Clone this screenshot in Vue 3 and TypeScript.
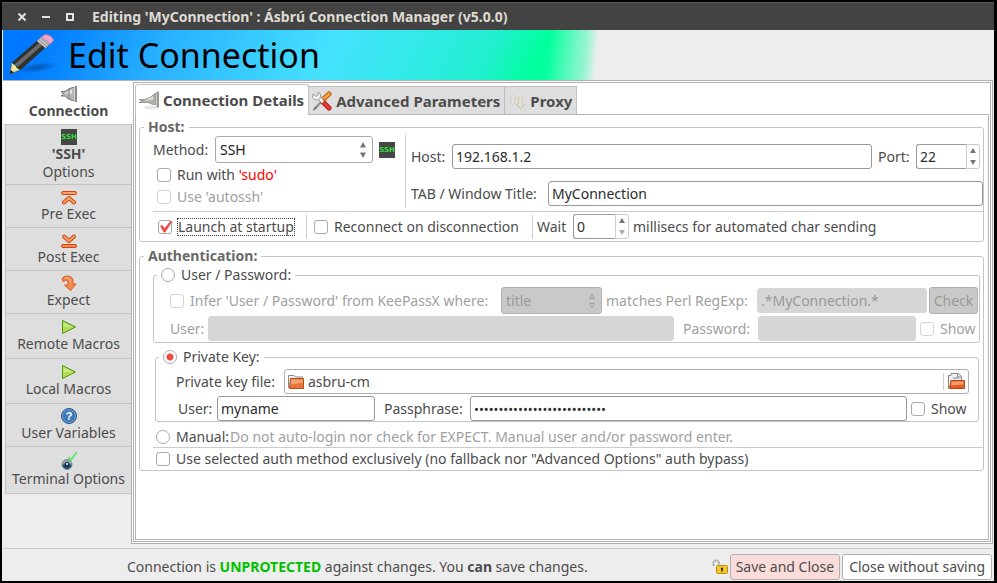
<script setup lang="ts">
import { ref } from 'vue'

interface SideTab {
  icon: string
  label: string
  strong?: string
  size: string
}

const sideTabs: SideTab[] = [
  { icon: 'plug', label: '', strong: 'Connection', size: 'active' },
  { icon: 'ssh', label: 'Options', strong: "'SSH'", size: 'double' },
  { icon: 'pre', label: 'Pre Exec', size: 'short' },
  { icon: 'post', label: 'Post Exec', size: 'short' },
  { icon: 'expect', label: 'Expect', size: 'short' },
  { icon: 'play', label: 'Remote Macros', size: 'tall' },
  { icon: 'play', label: 'Local Macros', size: 'tall' },
  { icon: 'help', label: 'User Variables', size: 'short' },
  { icon: 'terminal', label: 'Terminal Options', size: 'last' },
]

const method = ref('SSH')
const host = ref('192.168.1.2')
const port = ref(22)
const title = ref('MyConnection')
const sudo = ref(false)
const launch = ref(true)
const reconnect = ref(false)
const wait = ref(0)
const auth = ref('key')
const pattern = ref('.*MyConnection.*')
const keyUser = ref('myname')
const passphrase = ref('abcdefghijklmnopqrstuvwxyz0')
const showPassphrase = ref(false)
const exclusive = ref(false)
</script>

<template>
  <div class="window">
    <header class="titlebar">
      <button class="wm" type="button" aria-label="Close">
        <svg width="10" height="10" viewBox="0 0 10 10"><path d="M1.500 1.500l7 7M8.500 1.500l-7 7" stroke="#e6e3dc" stroke-width="2" /></svg>
      </button>
      <button class="wm" type="button" aria-label="Minimize">
        <svg width="10" height="10" viewBox="0 0 10 10"><path d="M1 5h8" stroke="#e6e3dc" stroke-width="2" /></svg>
      </button>
      <button class="wm" type="button" aria-label="Maximize">
        <svg width="10" height="10" viewBox="0 0 10 10"><path d="M2 2h6v6H2z" fill="none" stroke="#e6e3dc" stroke-width="2" /></svg>
      </button>
      <span class="caption">Editing 'MyConnection' : Ásbrú Connection Manager (v5.0.0)</span>
    </header>

    <div class="banner">
      <svg width="52" height="46" viewBox="0 0 54 46">
        <defs>
          <radialGradient id="shade"><stop offset="0" stop-color="#003a80" stop-opacity="0.6" /><stop offset="1" stop-color="#003a80" stop-opacity="0" /></radialGradient>
        </defs>
        <ellipse cx="31" cy="36" rx="22" ry="5" fill="url(#shade)" transform="rotate(-8 31 36)" />
        <path d="M3 43L5 31L14 38Z" fill="#f3e7a4" stroke="#6b5a20" stroke-width="0.600" />
        <path d="M3 43L3.800 38.500L7 41Z" fill="#161616" />
        <path d="M5 31L32 7.500L41 14.500L14 38.500L10 36.500L9 33Z" fill="#303030" />
        <path d="M8 32.500L34.500 9.500L37.500 12L11 35.500Z" fill="#696969" />
        <path d="M31 8.500L36 4L45 11L40 16Z" fill="#c9c9c9" stroke="#777" stroke-width="0.600" />
        <path d="M33 7l8.500 7.500M35 5.500l8.500 7" stroke="#777" stroke-width="0.900" />
        <path d="M36 4L39 2Q42 1 45.500 3.500Q49 6.500 48 8.500L45 11.500Z" fill="#f2a3cf" stroke="#b26d96" stroke-width="0.600" />
      </svg>
      <h1>Edit Connection</h1>
    </div>

    <main class="body">
      <nav class="side" aria-label="Sections">
        <button v-for="tab in sideTabs" :key="(tab.strong ?? '') + tab.label" type="button" class="side-tab" :class="tab.size">
          <svg v-if="tab.icon === 'plug'" width="16" height="16" viewBox="0 0 16 16">
            <path d="M0 5.500h4l3.500-2.500 4-1.500h2v13h-2l-4-1.500-3.500-3H0l2.500-2z" fill="#b4b5b1" stroke="#777875" />
            <path d="M3 7.500l5-2 3-2v4z" fill="#e6e6e2" /><path d="M8 3v10" stroke="#80817d" /><path d="M15 0v16" stroke="#60615e" stroke-width="1.500" /><path d="M13.500 0v16" stroke="#d8d8d4" />
          </svg>
          <svg v-else-if="tab.icon === 'ssh'" class="ssh" width="16" height="16" viewBox="0 0 16 16" role="img">
            <rect width="16" height="16" fill="#454746" />
            <text x="8" y="10" text-anchor="middle">SSH</text>
          </svg>
          <svg v-else-if="tab.icon === 'pre'" width="16" height="16" viewBox="0 0 16 16">
            <rect x="0.500" y="2.500" width="15" height="3" rx="1.500" fill="#f6a36b" stroke="#d4440c" />
            <path d="M3 13.500L8 9l5 4.500" fill="none" stroke="#d4440c" stroke-width="4" stroke-linecap="round" stroke-linejoin="round" />
            <path d="M3 13.500L8 9l5 4.500" fill="none" stroke="#f9a36a" stroke-width="2" stroke-linecap="round" stroke-linejoin="round" />
          </svg>
          <svg v-else-if="tab.icon === 'post'" width="16" height="16" viewBox="0 0 16 16">
            <rect x="0.500" y="12.500" width="15" height="3" rx="1.500" fill="#f58b55" stroke="#d4440c" />
            <path d="M3 4.500L8 9l5-4.500" fill="none" stroke="#d4440c" stroke-width="4" stroke-linecap="round" stroke-linejoin="round" />
            <path d="M3 4.500L8 9l5-4.500" fill="none" stroke="#f9a36a" stroke-width="2" stroke-linecap="round" stroke-linejoin="round" />
          </svg>
          <svg v-else-if="tab.icon === 'expect'" width="16" height="16" viewBox="0 0 16 16">
            <path d="M1 5Q1.500 1 6 1Q12 1 12 6.500V9H15L9.500 15.500L3.500 10H7V7.500Q7 5 4.500 5L2.500 7Z" fill="#f28c50" stroke="#d4561c" stroke-linejoin="round" />
            <path d="M4 2.500Q9 2 9.500 7.500" fill="none" stroke="#f8c19c" />
          </svg>
          <svg v-else-if="tab.icon === 'play'" width="16" height="16" viewBox="0 0 16 16">
            <path d="M1.500 1.500L14.500 8L1.500 14.500Z" fill="#b3dc52" stroke="#4e9a14" stroke-linejoin="round" />
            <path d="M2.500 3.500L11 8H2.500Z" fill="#cbe98a" />
          </svg>
          <svg v-else-if="tab.icon === 'help'" class="help" width="16" height="16" viewBox="0 0 16 16">
            <circle cx="8" cy="8" r="7.500" fill="#3c78b8" stroke="#245488" />
            <circle cx="8" cy="8" r="6.500" fill="none" stroke="#80aadb" stroke-width="0.800" />
            <text x="8" y="12" text-anchor="middle">?</text>
          </svg>
          <svg v-else width="16" height="18" viewBox="0 0 16 18">
            <circle cx="6" cy="12.500" r="5" fill="#8ca6a8" stroke="#788b90" />
            <path d="M1.500 12.500h9a4.500 4.500 0 0 1-9 0z" fill="#214c70" />
            <circle cx="6" cy="12.500" r="2.500" fill="#13304e" /><circle cx="6" cy="12" r="1" fill="#fff" />
            <path d="M7.500 5l2.500 3L15.500 0.500" fill="none" stroke="#65e868" stroke-width="2" />
          </svg>
          <b v-if="tab.strong">{{ tab.strong }}</b>
          <span v-if="tab.label">{{ tab.label }}</span>
        </button>
      </nav>

      <section class="panel">
        <div class="panel-inner">
          <div class="tabs" role="tablist">
            <button class="tab on" type="button" role="tab" aria-selected="true">
              <svg width="20" height="20" viewBox="0 0 20 20">
                <ellipse cx="12" cy="17.500" rx="7" ry="2" fill="#e8e8e8" />
                <path d="M0 9.500h5l6-2 5-4h1v11h-3l-5-2H0l4-1.500z" fill="#b0b1ad" stroke="#858682" stroke-width="0.700" />
                <path d="M5 11l9-4.500v3z" fill="#e4e4df" /><path d="M19 1.500v16" stroke="#777873" stroke-width="1.500" /><path d="M17.500 1.500v16" stroke="#ccccc7" />
              </svg>
              Connection Details
            </button>
            <button class="tab" type="button" role="tab" aria-selected="false">
              <svg width="20" height="20" viewBox="0 0 20 20">
                <path d="M17 3L10.500 9" stroke="#c75b12" stroke-width="5" stroke-linecap="round" />
                <path d="M17 3L10.500 9" stroke="#f2a23c" stroke-width="3" stroke-linecap="round" />
                <path d="M10 10L3 17.500" stroke="#8c8c88" stroke-width="2" /><path d="M4.500 16L1.500 19" stroke="#656562" stroke-width="1.500" />
                <path d="M11 11l6 6" stroke="#b51616" stroke-width="5" stroke-linecap="round" />
                <path d="M11 11l6 6" stroke="#e53b34" stroke-width="3" stroke-linecap="round" />
                <path d="M5 5l6 6" stroke="#8c8c88" stroke-width="4" /><path d="M5 5l6 6" stroke="#f1f1ee" stroke-width="2.500" />
                <path d="M1 3a4 4 0 0 0 7 4a4 4 0 0 0-2-6v3L4 5.500z" fill="#f1f1ee" stroke="#8c8c88" stroke-width="0.800" />
              </svg>
              Advanced Parameters
            </button>
            <button class="tab" type="button" role="tab" aria-selected="false">
              <svg width="18" height="18" viewBox="0 0 18 18">
                <path d="M1.500 6L5 2.500L8.500 6H6.500V12H3.500V6Z" fill="#e6e1d8" stroke="#c9c5bd" stroke-dasharray="1 1" />
                <path d="M10.500 5h4v7h2.500L12.500 16.500L8 12h2.500z" fill="#e6ddcc" stroke="#d4cfc6" />
                <path d="M8 12l4.500 4.500L17 12" fill="none" stroke="#aaa" stroke-dasharray="2 1" />
              </svg>
              Proxy
            </button>
          </div>

          <div class="page">
            <fieldset class="group host-group">
              <legend class="heading">Host:</legend>
              <div class="host-top">
                <div class="method-col">
                  <div class="line method-line">
                    <label class="method-label" for="method">Method:</label>
                    <span class="drop">
                      <select id="method" v-model="method"><option>SSH</option></select>
                      <svg width="8" height="20" viewBox="0 0 8 20"><path d="M1 7.500L4 2L7 7.500Z M1 12.500L4 18L7 12.500Z" fill="#777" /></svg>
                    </span>
                    <svg class="ssh" width="16" height="16" viewBox="0 0 16 16"><rect width="16" height="16" fill="#454746" /><text x="8" y="10" text-anchor="middle">SSH</text></svg>
                  </div>
                  <label class="tick"><input v-model="sudo" type="checkbox" /><span>Run with <em>'sudo'</em></span></label>
                  <label class="tick off"><input type="checkbox" disabled /><span>Use 'autossh'</span></label>
                </div>
                <div class="host-col">
                  <div class="line host-line">
                    <label class="host-label" for="host">Host:</label>
                    <input id="host" v-model="host" class="entry grow" type="text" />
                    <label class="port-label" for="port">Port:</label>
                    <span class="spin port-spin">
                      <input id="port" v-model="port" class="entry" type="number" />
                      <span class="steps">
                        <button type="button" aria-label="Increase port" @click="port++"><svg width="6" height="5" viewBox="0 0 6 5"><path d="M0 5L3 0L6 5Z" fill="#777" /></svg></button>
                        <button type="button" aria-label="Decrease port" @click="port--"><svg width="6" height="5" viewBox="0 0 6 5"><path d="M0 0L3 5L6 0Z" fill="#777" /></svg></button>
                      </span>
                    </span>
                  </div>
                  <div class="line">
                    <label class="title-label" for="title">TAB / Window Title:</label>
                    <input id="title" v-model="title" class="entry grow" type="text" />
                  </div>
                </div>
              </div>
              <hr />
              <div class="line startup">
                <label class="tick launch"><input v-model="launch" type="checkbox" /><span class="focus">Launch at startup</span></label>
                <label class="tick reconnect"><input v-model="reconnect" type="checkbox" /><span>Reconnect on disconnection</span></label>
                <label class="wait-label" for="wait">Wait</label>
                <span class="spin wait-spin">
                  <input id="wait" v-model="wait" class="entry" type="number" />
                  <span class="steps">
                    <button type="button" aria-label="Increase wait" @click="wait++"><svg width="6" height="5" viewBox="0 0 6 5"><path d="M0 5L3 0L6 5Z" fill="#777" /></svg></button>
                    <button type="button" aria-label="Decrease wait" disabled><svg width="6" height="5" viewBox="0 0 6 5"><path d="M0 0L3 5L6 0Z" fill="#aaa" /></svg></button>
                  </span>
                </span>
                <span>millisecs for automated char sending</span>
              </div>
            </fieldset>

            <fieldset class="group auth-group">
              <legend class="heading">Authentication:</legend>

              <fieldset class="group password-group">
                <legend><label class="tick"><input v-model="auth" type="radio" name="auth" value="password" /><span>User / Password:</span></label></legend>
                <div class="line off infer">
                  <label class="tick infer-label"><input type="checkbox" disabled /><span>Infer 'User / Password' from KeePassX where:</span></label>
                  <span class="drop small">
                    <select aria-label="KeePassX field" disabled><option>title</option></select>
                    <svg width="8" height="20" viewBox="0 0 8 20"><path d="M1.500 7.500L4 3L6.500 7.500Z M1.500 12.500L4 17L6.500 12.500Z" fill="#c6c6c6" stroke="#999" stroke-width="0.800" /></svg>
                  </span>
                  <label class="regexp-label" for="pattern">matches Perl RegExp:</label>
                  <input id="pattern" v-model="pattern" class="entry grow" type="text" disabled />
                  <button class="check" type="button" disabled>Check</button>
                </div>
                <div class="line off credentials">
                  <label class="user-label" for="pw-user">User:</label>
                  <input id="pw-user" class="entry grow" type="text" disabled />
                  <label class="pw-label" for="pw-pass">Password:</label>
                  <input id="pw-pass" class="entry pw-entry" type="password" disabled />
                  <label class="tick show"><input type="checkbox" disabled /><span>Show</span></label>
                </div>
              </fieldset>

              <fieldset class="group key-group">
                <legend><label class="tick"><input v-model="auth" type="radio" name="auth" value="key" /><span>Private Key:</span></label></legend>
                <div class="line key-file">
                  <span id="key-label" class="key-label">Private key file:</span>
                  <button class="chooser" type="button" aria-labelledby="key-label">
                    <svg width="16" height="14" viewBox="0 0 16 14">
                      <path d="M0.500 12.500V0.500H6L7.500 2H14.500V12.500Z" fill="#eee" stroke="#888" />
                      <path d="M2.500 3.500H15.500V13.500H1.500Z" fill="#e8763a" stroke="#bc4c18" /><path d="M3 4.500h12v3l-12 2z" fill="#f3a271" />
                    </svg>
                    <span class="grow">asbru-cm</span>
                    <svg class="open" width="17" height="17" viewBox="0 0 17 17">
                      <path d="M0.500 15.500V2.500H3V0.500H10.500L13.500 3.500V12H3Z" fill="#eee" stroke="#888" />
                      <path d="M9.500 0.500v3.500h4M5 5h6" fill="none" stroke="#888" />
                      <path d="M3 7.500H16.500V15.500H1.500Z" fill="#e65c20" stroke="#b8481b" /><path d="M3.500 8.500h12v3l-12 1z" fill="#f59b69" />
                    </svg>
                  </button>
                </div>
                <div class="line">
                  <label class="key-user-label" for="key-user">User:</label>
                  <input id="key-user" v-model="keyUser" class="entry key-user" type="text" />
                  <label class="phrase-label" for="phrase">Passphrase:</label>
                  <input id="phrase" v-model="passphrase" class="entry grow phrase" :type="showPassphrase ? 'text' : 'password'" />
                  <label class="tick show"><input v-model="showPassphrase" type="checkbox" /><span>Show</span></label>
                </div>
              </fieldset>

              <label class="tick manual"><input v-model="auth" type="radio" name="auth" value="manual" /><span>Manual:</span><small>Do not auto-login nor check for EXPECT. Manual user and/or password enter.</small></label>
              <hr />
              <label class="tick exclusive"><input v-model="exclusive" type="checkbox" /><span>Use selected auth method exclusively (no fallback nor "Advanced Options" auth bypass)</span></label>
            </fieldset>
          </div>
        </div>
      </section>
    </main>

    <footer class="foot">
      <p>Connection is <b class="ok">UNPROTECTED</b> against changes. You <b>can</b> save changes.</p>
      <svg width="16" height="16" viewBox="0 0 16 16">
        <path d="M1.500 7V4Q1.500 1.500 4 1.500Q7 1.500 7 5V7" fill="none" stroke="#aaa" stroke-width="2" stroke-dasharray="2 0.500" />
        <rect x="4.500" y="6.500" width="11" height="8" rx="1" fill="#f4c72d" stroke="#b98f12" />
        <path d="M10 8.500a1.200 1.200 0 0 1 .6 2.200v2h-1.200v-2A1.200 1.200 0 0 1 10 8.500z" fill="#222" />
      </svg>
      <button class="action save" type="button">Save and Close</button>
      <button class="action" type="button">Close without saving</button>
    </footer>
  </div>
</template>

<style>
body {
  margin: 0;
  background: #000;
}
</style>

<style scoped>
* {
  box-sizing: border-box;
}
.window {
  display: flex;
  flex-direction: column;
  min-height: 100vh;
  padding: 1px;
  border: solid #000;
  border-width: 2px 3px 2px 2px;
  background: #ededed;
  font: 14px/16px "Noto Sans", "Open Sans", sans-serif;
  color: #4c4c4c;
}
button,
input,
select {
  margin: 0;
  font: inherit;
  color: inherit;
}
button {
  padding: 0;
  border: 0;
  background: none;
  white-space: nowrap;
}
svg {
  flex: none;
  display: block;
}
label,
span,
b {
  white-space: nowrap;
}
.grow {
  flex: 1;
  min-width: 0;
}

.titlebar {
  display: flex;
  align-items: center;
  gap: 14px;
  height: 28px;
  margin: -1px -1px 0;
  padding: 1px 15px 0;
  border-top: 1px solid #5a5a5a;
  background: #434343;
}
.wm {
  height: 10px;
}
.caption {
  padding-left: 3px;
  font-weight: 700;
  color: #dfdbd2;
}
.banner {
  display: flex;
  align-items: center;
  gap: 9px;
  height: 50px;
  padding-left: 4px;
  background:
    linear-gradient(95deg, rgba(237, 237, 237, 0) 545px, rgba(237, 237, 237, 0.6) 582px, #ededed 594px),
    linear-gradient(115deg, #0078ff 30px, #0a88ff 70px, #28b0ff 150px, #45e0ff 300px, #30eae6 390px, #22efd0 450px, #00ff9c 497px, #10ffa6 530px);
}
.banner h1 {
  margin: 0;
  font-size: 34px;
  font-weight: 400;
  line-height: 48px;
  color: #000;
}

.body {
  display: flex;
  flex: 1;
}
.side {
  display: flex;
  flex-direction: column;
  flex: none;
  width: 128px;
  border-top: 1px solid #b5b5b5;
}
.side-tab {
  display: flex;
  flex-direction: column;
  align-items: center;
  height: 43px;
  margin-left: 2px;
  padding-top: 4px;
  border: solid #c4c4c4;
  border-width: 0 0 1px 1px;
  background: #dedede;
  line-height: 18px;
}
.side-tab.active {
  position: relative;
  z-index: 1;
  height: 44px;
  margin: 0 -2px 0 0;
  padding-top: 5px;
  border-left-color: #fff;
  background: #fff;
}
.side-tab.double {
  height: 60px;
}
.side-tab.tall {
  height: 45px;
  padding-top: 5px;
}
.side-tab.last {
  height: 47px;
  padding-top: 5px;
}
.ssh text {
  font: 700 7px "DejaVu Sans", sans-serif;
  fill: #35dd35;
}
.help text {
  font: 700 11px "Liberation Sans", sans-serif;
  fill: #fff;
}

.panel {
  display: flex;
  flex: 1;
  min-width: 0;
  padding: 1px;
  border: 1px solid #b0b0b0;
  background: #fff;
}
.panel-inner {
  display: flex;
  flex-direction: column;
  flex: 1;
  min-width: 0;
  padding: 1px;
  border: 1px solid #b0b0b0;
}
.tabs {
  display: flex;
  align-items: flex-end;
}
.tab {
  display: flex;
  align-items: center;
  gap: 4px;
  height: 28px;
  padding: 0 4px 0 3px;
  border: solid #c0c0c0;
  border-width: 1px 1px 0 0;
  background: #dedede;
  font-size: 15px;
  font-weight: 700;
}
.tab.on {
  position: relative;
  z-index: 1;
  height: 31px;
  margin-bottom: -1px;
  border-width: 1px 1px 0;
  border-radius: 3px 3px 0 0;
  background: #fff;
}
.page {
  flex: 1;
  padding: 4px;
  padding-left: 3px;
  border: 1px solid #b5b5b5;
}

.group {
  min-width: 0;
  margin: 0;
  padding: 0;
  border: 1px solid #c4c4c4;
  border-radius: 3px;
}
legend {
  height: 16px;
  margin-left: 4px;
  padding: 0 4px;
}
.heading {
  font-weight: 700;
  color: #696969;
}
.line,
.tick {
  display: flex;
  align-items: center;
}
.tick {
  gap: 6px;
}
.off {
  color: #a0a0a0;
}
em {
  font-style: normal;
  color: #f00;
}
hr {
  margin: 0;
  border: 0;
  border-top: 1px solid #ccc;
}
.entry {
  height: 25px;
  padding: 0 3px;
  border: 1px solid #999;
  border-radius: 3px;
  outline: 0;
  background: #fff;
  color: #2c2c2c;
}
.entry:disabled {
  border-color: #d6d6d6;
  background: #d6d6d6;
  color: #999;
}
input[type='number'] {
  appearance: textfield;
}
input[type='number']::-webkit-inner-spin-button {
  appearance: none;
}
input[type='checkbox'],
input[type='radio'] {
  flex: none;
  appearance: none;
  width: 14px;
  height: 14px;
  border: 1px solid #aaa;
  border-radius: 3px;
  background: #fff;
}
input[type='radio'] {
  border-radius: 50%;
}
input[type='radio']:checked {
  background: radial-gradient(circle, #ef4a42 3px, #fff 4px);
}
input[type='checkbox']:disabled {
  border-color: #d4d4d4;
}
input[type='checkbox']:checked::before {
  content: '';
  display: block;
  width: 14px;
  height: 12px;
  background: #f04b46;
  clip-path: polygon(8% 46%, 22% 38%, 40% 64%, 84% 0, 100% 0, 44% 100%, 34% 100%);
}
.drop {
  display: grid;
  align-items: center;
  width: 158px;
}
.drop > * {
  grid-area: 1 / 1;
}
.drop svg {
  justify-self: end;
  margin-right: 6px;
  pointer-events: none;
}
select {
  appearance: none;
  width: 100%;
  height: 27px;
  padding: 0 4px;
  border: 1px solid #aaa;
  border-radius: 3px;
  background: #fff;
  color: #222;
}
select:disabled,
.check {
  border: 1px solid #b0b0b0;
  border-radius: 3px;
  background: #c9c9c9;
  color: #999;
  opacity: 1;
}
.drop.small {
  width: 101px;
}
.spin {
  display: flex;
}
.spin .entry {
  width: 50px;
  border-right: 0;
  border-radius: 3px 0 0 3px;
}
.steps {
  display: grid;
  justify-items: center;
  width: 14px;
  border: 1px solid #ccc;
  border-radius: 0 3px 3px 0;
}
.steps button {
  display: grid;
  place-items: center;
}

.host-top {
  display: flex;
  margin-bottom: 3px;
}
.method-col {
  width: 266px;
  padding: 1px 0 0 13px;
  border-right: 1px solid #ccc;
}
.method-line {
  height: 27px;
  margin-bottom: 1px;
}
.method-line .ssh {
  margin-left: 6px;
}
.method-label {
  width: 62px;
}
.method-col .tick {
  height: 22px;
  padding-left: 4px;
}
.host-col {
  display: grid;
  flex: 1;
  align-content: start;
  gap: 12px;
  min-width: 0;
  padding: 9px 0 0 5px;
}
.host-line {
  margin-right: 3px;
}
.host-label {
  width: 41px;
}
.port-label {
  width: 44px;
  padding-left: 6px;
}
.title-label {
  width: 137px;
}
.host-group hr,
.auth-group hr {
  margin-left: 13px;
}
.startup {
  height: 29px;
  padding-left: 18px;
}
.startup .tick {
  height: 24px;
  border-right: 1px solid #ccc;
}
.launch {
  width: 149px;
}
.focus {
  outline: 1px dotted #444;
}
.reconnect {
  width: 226px;
  padding-left: 7px;
}
.wait-label {
  width: 40px;
  padding-left: 4px;
}
.wait-spin {
  margin-right: 4px;
}
.wait-spin .entry {
  width: 42px;
}

.auth-group {
  margin-top: 6px;
}
.password-group {
  margin: 3px 3px 0 13px;
  padding: 4px 1px 1px 16px;
}
.password-group legend {
  margin-left: -13px;
}
.infer-label {
  width: 331px;
}
.regexp-label {
  width: 155px;
  padding-left: 4px;
}
.check {
  width: 49px;
  height: 27px;
  margin-left: 2px;
}
.credentials {
  margin-top: 2px;
}
.user-label {
  width: 38px;
}
.pw-label {
  width: 84px;
  padding-left: 9px;
}
.pw-entry {
  width: 158px;
}
.show {
  width: 62px;
  padding-left: 4px;
}
.key-group {
  margin: 6px 4px 0 15px;
  padding: 4px 9px 0 20px;
}
.key-group legend {
  margin-left: -17px;
}
.key-label {
  width: 108px;
}
.key-file {
  margin-bottom: 2px;
}
.chooser {
  display: flex;
  flex: 1;
  align-items: center;
  gap: 4px;
  height: 25px;
  padding: 0 3px;
  border: 1px solid #b0b0b0;
  border-radius: 3px;
  text-align: left;
}
.open {
  width: 22px;
  padding-left: 4px;
  border-left: 1px solid #ccc;
}
.key-user-label {
  width: 41px;
  padding-left: 2px;
}
.key-user {
  width: 158px;
}
.phrase-label {
  width: 95px;
  padding-left: 9px;
}
.phrase {
  font-size: 13px;
}
.manual {
  height: 21px;
  margin-top: 4px;
  padding-left: 16px;
}
.manual small {
  margin-left: -5px;
  font-size: inherit;
  color: #a0a0a0;
}
.exclusive {
  height: 22px;
  padding-left: 16px;
}

.foot {
  display: flex;
  align-items: center;
  height: 32px;
  margin-top: 4px;
  padding: 4px 1px 0 0;
  border-top: 1px solid #ccc;
}
.foot p {
  flex: 1;
  margin: 0;
  text-align: center;
}
.foot .ok {
  color: #00c000;
}
.action {
  height: 26px;
  margin-left: 2px;
  padding: 0 6px;
  border: 1px solid #b0b0b0;
  border-radius: 3px;
  background: #fff;
}
.action.save {
  padding: 0 5px;
  background: #fbdcda;
}
</style>
